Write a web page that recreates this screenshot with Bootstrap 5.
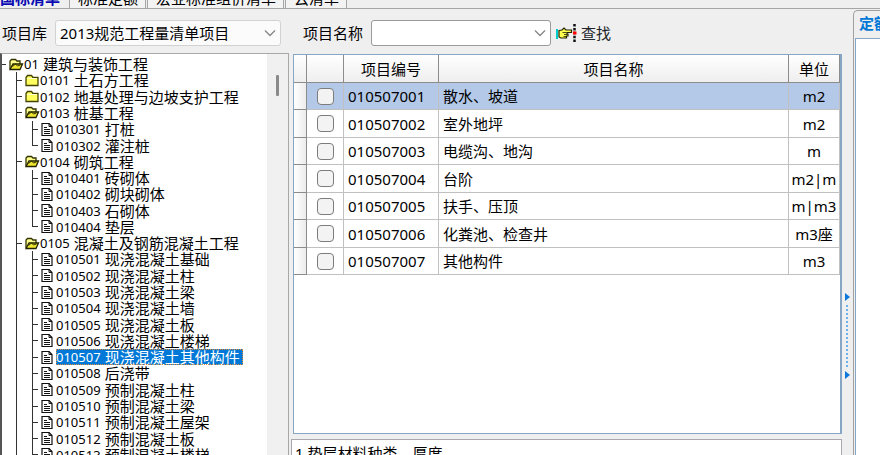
<!DOCTYPE html>
<html lang="zh-CN">
<head>
<meta charset="utf-8">
<meta name="viewport" content="width=device-width, initial-scale=1">
<title>项目库</title>
<link href="https://cdn.jsdelivr.net/npm/bootstrap@5.3.0/dist/css/bootstrap.min.css" rel="stylesheet">
<style>
  body { font: 15px/20px "Noto Sans", "Noto Sans CJK SC", sans-serif; color: #000; background: #efefef; }
  button { color: inherit; }

  .tab-strip { height: 9px; border-bottom: 1px solid #a5a5a5; }
  .tab-item { border: 1px solid #a5a5a5; border-width: 0 1px; background: #f3f3f3; padding: 0 7px 0 8px; height: 24px; line-height: 28px; margin-right: 1px; }
  .tab-item.current { background: #efefef; color: #0a0ab4; font-weight: 700; padding: 0 8px 0 0; border: 0; }

  .main-area { min-height: 0; }
  .left-pane { width: 289px; }
  .tool-row { height: 44px; padding-top: 4px; }
  .left-pane .tool-row label { margin-left: 2px; }
  .mid-pane .tool-row label { margin-left: 10px; }
  .find-btn { font: inherit; }
  .pick { appearance: none; border: 1px solid #d2d2d2; border-radius: 3px; height: 26px; padding: 0 26px 0 4px; color: #000;
          line-height: 22px; background: #fbfbfb; }
  .pick.strong { border-color: #9a9a9a; background: #fff; width: 180px; }
  .pick-wrap { display: grid; }
  .pick-wrap > * { grid-area: 1 / 1; }
  .pick-wrap svg { justify-self: end; align-self: center; margin-right: 5px; pointer-events: none; }

  .tree-box { border: 1px solid #a8a8a8; border-left: 2px solid #555; border-bottom: 0; background: #fff; padding-top: 2px; }
  .tree { display: grid; grid-auto-rows: 1fr; min-height: calc(100% + 8px); }
  .tree li { display: flex; align-items: center; line-height: 16px; white-space: nowrap; min-height: 16px; }
  .tree .node-text { display: flex; align-items: center; height: 16px; }
  .tree .code { font-size: 13px; margin-right: 4px; }
  .tree i { width: 16px; align-self: stretch; flex: none;
    background: linear-gradient(#333, #333) 0 0 / 1px 100% no-repeat; }
  .tree i.tee { background: linear-gradient(#333, #333) 0 0 / 1px 100% no-repeat, linear-gradient(#333, #333) 0 50% / 6px 1px no-repeat; width: 8px; }
  .tree i.end { background: linear-gradient(#333, #333) 0 0 / 1px 50% no-repeat, linear-gradient(#333, #333) 0 50% / 6px 1px no-repeat; width: 8px; }
  .tree i.dash { background: linear-gradient(#333, #333) 0 50% / 4px 1px no-repeat; width: 6px; }
  .tree i.gap { background: none; width: 14px; }
  .tree svg { flex: none; }
  .tree .doc { margin-right: 2px; }
  .tree .picked { background: #0078d7; color: #fff; outline: 1px dotted #e08a3c; outline-offset: -1px; padding-right: 3px; }
  .gutter { width: 21px; background: #f0f0f0; padding-top: 21px; margin-top: -2px; }
  .thumb { width: 3px; height: 21px; background: #8a8a8a; border-radius: 1px; margin-left: 9px; }

  .mid-pane { padding-left: 4px; }
  .grid-box { background: #fff; border: 1px solid #86a6c6; border-right-width: 2px; margin-top: 1px; }
  .items { table-layout: fixed; width: 100%; border-collapse: separate; border-spacing: 0; }
  .items th { height: 28px; font-weight: 400; text-align: center; background: linear-gradient(#fff, #eee);
              border-right: 1px solid #8c8c8c; border-bottom: 1px solid #8c8c8c; padding: 0; }
  .items td { height: 27px; padding: 0 4px; border-right: 1px solid #c0c0c0; border-bottom: 1px solid #c0c0c0; }
  .items tr > :last-child { text-align: center; padding: 0; }
  .items td:first-child { background: linear-gradient(90deg, #fff, #ececec); border-color: #8c8c8c; }
  .items .on td:not(:first-child) { background: #b4c9e8; }
  .items tbody tr:nth-child(2n) td { height: 28px; }
  .tick { appearance: none; display: block; width: 17px; height: 17px; margin: 0 auto; border: 1px solid #7c7c7c; border-radius: 4px; background: #f3f3f3; }
  .note-box { margin-top: 5px; height: 16px; background: #fff; border: 1px solid #a8a8ae; border-bottom: 0; margin-left: -2px; padding: 3px 3px 0; }

  .splitter { width: 11px; color: #0a78dc; padding-top: 284px; }
  .splitter .dots { width: 2px; height: 62px; background: repeating-linear-gradient(#6ab0ee 0 2px, transparent 2px 4px); }
  .side-pane { width: 27px; margin-top: 1px; border: 1px solid #a0a0a0; border-right: 0; border-bottom: 0; border-radius: 5px 0 0 0; padding-left: 1px; }
  .side-tab { color: #0078d7; font-weight: 700; height: 27px; padding: 2px 0 0 4px; white-space: nowrap; }
  .side-body { border: 1px solid #86a6c6; border-width: 1px 0 0 1px; background: #fff; }
</style>
</head>
<body class="vh-100 overflow-hidden d-flex flex-column">

<svg width="0" height="0" class="d-none" aria-hidden="true">
  <symbol id="open" viewBox="0 0 15 13">
    <path d="M1.500 11V3L3 1.500h4l1.500 1.500h3V6" fill="#ffff8c" stroke="#333300" stroke-width="1.300"/>
    <path d="M1.500 11.500L4.500 6H14L11.500 11.500z" fill="#f0e830" stroke="#222200" stroke-width="1.300"/>
    <path d="M4 8.500l3-2.500 2 2 3-1" fill="none" stroke="#333300"/>
  </symbol>
  <symbol id="shut" viewBox="0 0 15 13">
    <path d="M1.500 11.500V3.500L3 1.500h4l1.500 2h5v8z" fill="#ffff60" stroke="#444400" stroke-width="1.300"/>
    <path d="M2.500 4.500h10" stroke="#ffffc8"/>
  </symbol>
  <symbol id="page" viewBox="0 0 13 13">
    <path d="M1.500.5h7l3 3v9h-10z" fill="#fff" stroke="#111" stroke-width="1.200"/>
    <path d="M8.500.5v3h3M3.500 4.500h3M3.500 6.500h6M3.500 8.500h6M3.500 10.500h6" fill="none" stroke="#111"/>
  </symbol>
  <symbol id="chev" viewBox="0 0 12 8">
    <path d="M1 1.500l5 5 5-5" fill="none" stroke="#868686" stroke-width="1.300"/>
  </symbol>
</svg>

<nav class="tab-strip d-flex align-items-end overflow-hidden flex-shrink-0">
  <button class="tab-item current">国标清单</button>
  <button class="tab-item">标准定额</button>
  <button class="tab-item">宏业标准组价清单</button>
  <button class="tab-item">云清单</button>
</nav>

<main class="main-area d-flex flex-grow-1">
  <section class="left-pane d-flex flex-column flex-shrink-0">
    <div class="tool-row d-flex align-items-center flex-shrink-0">
      <label for="lib" class="me-2 text-nowrap">项目库</label>
      <div class="pick-wrap flex-grow-1 me-2">
        <select id="lib" class="pick"><option>2013规范工程量清单项目</option></select>
        <svg width="12" height="8"><use href="#chev"/></svg>
      </div>
    </div>
    <div class="tree-box d-flex flex-grow-1 overflow-hidden">
      <div class="flex-grow-1 overflow-hidden">
        <ul class="tree list-unstyled mb-0" id="tree"></ul>
      </div>
      <div class="gutter flex-shrink-0"><div class="thumb"></div></div>
    </div>
  </section>

  <section class="mid-pane d-flex flex-column flex-grow-1">
    <div class="tool-row d-flex align-items-center flex-shrink-0">
      <label for="nm" class="me-2 text-nowrap">项目名称</label>
      <div class="pick-wrap">
        <select id="nm" class="pick strong"><option></option></select>
        <svg width="12" height="8"><use href="#chev"/></svg>
      </div>
      <button class="find-btn btn p-0 border-0 d-flex align-items-center ms-1">
        <svg width="22" height="18" viewBox="0 0 22 18" class="me-1" aria-hidden="true">
          <path d="M1 5v10h2V5z" fill="#0cc"/>
          <path d="M4 6.500l3-.5 2-2 2 2h5.500v2.500H12v1.500h1v2h-1.500v2H6l-2-1z" fill="#ffff50" stroke="#222200" stroke-width="1.200"/>
          <path d="M7.500 8.500h4M9 10.500h3M8.500 12.500h3" stroke="#222200" stroke-width=".8"/>
          <path d="M19.500 0v18" stroke="#111" stroke-width="2.500" stroke-dasharray="2.500 1.400"/>
          <path d="M18 7.500h3.500v3H18z" fill="#f00"/>
        </svg>查找
      </button>
    </div>
    <div class="grid-box flex-grow-1">
      <table class="items">
        <colgroup><col style="width:13px"><col style="width:37px"><col style="width:95px"><col><col style="width:51px"></colgroup>
        <thead><tr><th></th><th></th><th>项目编号</th><th>项目名称</th><th>单位</th></tr></thead>
        <tbody id="rows"></tbody>
      </table>
    </div>
    <div class="note-box overflow-hidden flex-shrink-0">1.垫层材料种类、厚度</div>
  </section>

  <div class="splitter d-flex flex-column align-items-center flex-shrink-0">
    <svg width="5" height="8"><path d="M0 0l5 4-5 4z" fill="currentColor"/></svg>
    <div class="dots my-1"></div>
    <svg width="5" height="8"><path d="M0 0l5 4-5 4z" fill="currentColor"/></svg>
  </div>

  <aside class="side-pane d-flex flex-column flex-shrink-0 overflow-hidden">
    <div class="side-tab">定额</div>
    <div class="side-body flex-grow-1"></div>
  </aside>
</main>

<script src="https://cdn.jsdelivr.net/npm/bootstrap@5.3.0/dist/js/bootstrap.bundle.min.js"></script>
<script>
  const nodes = [
    ['01', '建筑与装饰工程', 'open'], ['0101', '土石方工程', 'shut'], ['0102', '地基处理与边坡支护工程', 'shut'],
    ['0103', '桩基工程', 'open'], ['010301', '打桩'], ['010302', '灌注桩', 'last'],
    ['0104', '砌筑工程', 'open'], ['010401', '砖砌体'], ['010402', '砌块砌体'], ['010403', '石砌体'], ['010404', '垫层', 'last'],
    ['0105', '混凝土及钢筋混凝土工程', 'open'], ['010501', '现浇混凝土基础'], ['010502', '现浇混凝土柱'], ['010503', '现浇混凝土梁'],
    ['010504', '现浇混凝土墙'], ['010505', '现浇混凝土板'], ['010506', '现浇混凝土楼梯'], ['010507', '现浇混凝土其他构件'],
    ['010508', '后浇带'], ['010509', '预制混凝土柱'], ['010510', '预制混凝土梁'], ['010511', '预制混凝土屋架'],
    ['010512', '预制混凝土板'], ['010513', '预制混凝土楼梯']
  ];
  document.getElementById('tree').innerHTML = nodes.map(([code, name, kind]) => {
    const level = code.length / 2;
    const lines = level === 1 ? '<i class="dash"></i>'
      : level === 2 ? '<i class="gap"></i><i class="tee"></i>'
      : '<i class="gap"></i><i></i><i class="' + (kind === 'last' ? 'end' : 'tee') + '"></i>';
    const icon = level === 3 ? '<svg class="doc" width="14" height="13"><use href="#page"/></svg>'
      : '<svg width="16" height="13"><use href="#' + kind + '"/></svg>';
    const cls = code === '010507' ? 'node-text picked' : 'node-text';
    return '<li>' + lines + icon + '<span class="' + cls + '"><span class="code">' + code + '</span><span>' + name + '</span></span></li>';
  }).join('');

  const items = [
    ['010507001', '散水、坡道', 'm2'], ['010507002', '室外地坪', 'm2'], ['010507003', '电缆沟、地沟', 'm'],
    ['010507004', '台阶', 'm2|m'], ['010507005', '扶手、压顶', 'm|m3'], ['010507006', '化粪池、检查井', 'm3座'], ['010507007', '其他构件', 'm3']
  ];
  document.getElementById('rows').innerHTML = items.map(([code, name, unit], n) =>
    '<tr' + (n ? '' : ' class="on"') + '><td></td><td><input type="checkbox" class="tick" aria-label="' + code + '"></td><td>'
    + code + '</td><td>' + name + '</td><td>' + unit + '</td></tr>').join('');
</script>
</body>
</html>
